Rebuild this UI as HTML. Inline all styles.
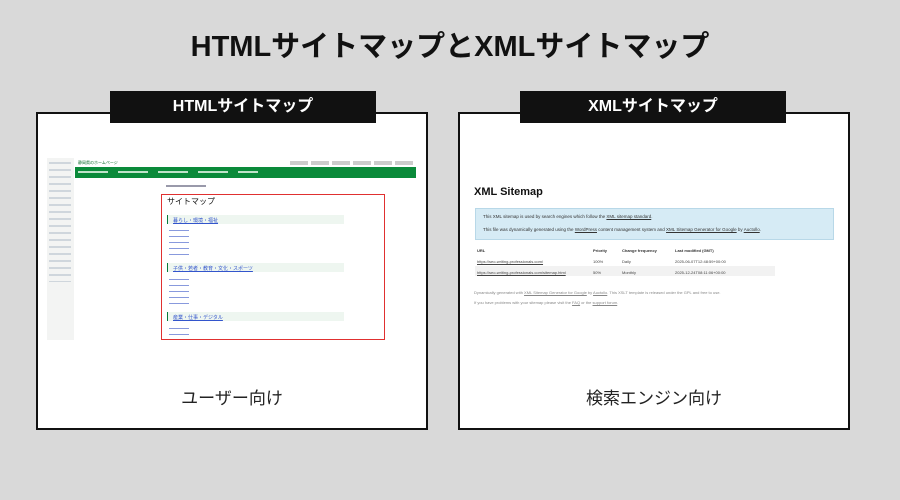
<!DOCTYPE html>
<html><head><meta charset="utf-8"><style>
*{margin:0;padding:0;box-sizing:border-box}
body{width:900px;height:500px;background:#d9d9d9;font-family:"Liberation Sans","Noto Sans CJK JP",sans-serif;position:relative;overflow:hidden}
.a{position:absolute}
h1{position:absolute;top:23px;left:0;width:900px;text-align:center;font-size:29px;font-weight:bold;color:#111}
.panel{position:absolute;top:112px;width:392px;height:318px;background:#fff;border:2px solid #111}
.lab{position:absolute;top:91px;width:266px;height:32px;background:#111;color:#fff;font-weight:bold;font-size:16px;text-align:center;line-height:32px}
.cap{position:absolute;top:384px;width:392px;text-align:center;font-size:17px;color:#222}
.t{font-size:4px;color:#3355cc;position:absolute;white-space:nowrap}
</style></head><body>
<h1>HTMLサイトマップとXMLサイトマップ</h1>
<div class="panel" style="left:36px"></div>
<div class="panel" style="left:458px"></div>
<div class="lab" style="left:110px">HTMLサイトマップ</div>
<div class="lab" style="left:520px">XMLサイトマップ</div>
<div class="cap" style="left:36px">ユーザー向け</div>
<div class="cap" style="left:458px">検索エンジン向け</div>

<div class="a" style="left:47px;top:158px;width:27px;height:182px;background:#f3f4f3"></div>
<div class="a" style="left:75px;top:167px;width:341px;height:11px;background:#0a8a3a"></div>
<div class="a" style="left:78px;top:160px;font-size:4px;color:#0a6a2a">静岡県のホームページ</div>
<div class="a" style="left:290px;top:161px;width:126px;height:4px;background:repeating-linear-gradient(90deg,#ccc 0 18px,#fff 18px 21px)"></div>
<div class="a" style="left:78px;top:171px;width:180px;height:2px;background:repeating-linear-gradient(90deg,#bfe3c9 0 30px,transparent 30px 40px)"></div>
<div class="a" style="left:49px;top:162px;width:22px;height:120px;background:repeating-linear-gradient(180deg,#9ab 0 2px,transparent 2px 7px);opacity:.4"></div>
<div class="a" style="left:166px;top:185px;width:40px;height:2px;background:#99a"></div>
<div class="a" style="left:161px;top:194px;width:224px;height:146px;border:1px solid #e03030"></div>
<div class="a" style="left:167px;top:196px;font-size:8px;color:#111">サイトマップ</div>
<div class="a" style="left:167px;top:215px;width:177px;height:9px;background:#eef6f0;border-left:1px solid #0a7a3a"></div>
<div class="t" style="left:173px;top:217px;font-size:5px;text-decoration:underline">暮らし・環境・福祉</div>
<div class="a" style="left:167px;top:263px;width:177px;height:9px;background:#eef6f0;border-left:1px solid #0a7a3a"></div>
<div class="t" style="left:173px;top:265px;font-size:5px;text-decoration:underline">子供・若者・教育・文化・スポーツ</div>
<div class="a" style="left:167px;top:312px;width:177px;height:9px;background:#eef6f0;border-left:1px solid #0a7a3a"></div>
<div class="t" style="left:173px;top:314px;font-size:5px;text-decoration:underline">産業・仕事・デジタル</div>
<div class="a" style="left:169px;top:230px;width:20px;height:25px;background:repeating-linear-gradient(180deg,#8899dd 0 1px,transparent 1px 6px)"></div>
<div class="a" style="left:169px;top:279px;width:20px;height:25px;background:repeating-linear-gradient(180deg,#8899dd 0 1px,transparent 1px 6px)"></div>
<div class="a" style="left:169px;top:328px;width:20px;height:10px;background:repeating-linear-gradient(180deg,#8899dd 0 1px,transparent 1px 6px)"></div>

<div class="a" style="left:474px;top:186px;font-size:11px;font-weight:bold;color:#111">XML Sitemap</div>
<div class="a" style="left:475px;top:208px;width:359px;height:32px;background:#d6ebf5;border:1px solid #b8d8e8"></div>
<div class="a" style="left:483px;top:214px;font-size:4.5px;color:#333">This XML sitemap is used by search engines which follow the <u>XML sitemap standard</u>.</div>
<div class="a" style="left:483px;top:227px;font-size:4.5px;color:#333">This file was dynamically generated using the <u>WordPress</u> content management system and <u>XML Sitemap Generator for Google</u> by <u>Auctollo</u>.</div>
<div class="a" style="left:475px;top:266px;width:300px;height:10px;background:#f2f2f2"></div>
<div class="a" style="left:477px;top:248px;font-size:4px;color:#333;font-weight:bold">URL</div>
<div class="a" style="left:593px;top:248px;font-size:4px;color:#333;font-weight:bold">Priority</div>
<div class="a" style="left:622px;top:248px;font-size:4px;color:#333;font-weight:bold">Change frequency</div>
<div class="a" style="left:675px;top:248px;font-size:4px;color:#333;font-weight:bold">Last modified (GMT)</div>
<div class="a" style="left:477px;top:259px;font-size:4px;color:#444"><u>https://seo-writing-professionals.com/</u></div>
<div class="a" style="left:593px;top:259px;font-size:4px;color:#444">100%</div>
<div class="a" style="left:622px;top:259px;font-size:4px;color:#444">Daily</div>
<div class="a" style="left:675px;top:259px;font-size:4px;color:#444">2025-06-07T12:48:59+00:00</div>
<div class="a" style="left:477px;top:270px;font-size:4px;color:#444"><u>https://seo-writing-professionals.com/sitemap.html</u></div>
<div class="a" style="left:593px;top:270px;font-size:4px;color:#444">50%</div>
<div class="a" style="left:622px;top:270px;font-size:4px;color:#444">Monthly</div>
<div class="a" style="left:675px;top:270px;font-size:4px;color:#444">2025-12-24T08:11:06+00:00</div>
<div class="a" style="left:474px;top:290px;font-size:4px;color:#888">Dynamically generated with <u>XML Sitemap Generator for Google</u> by <u>Auctollo</u>. This XSLT template is released under the GPL and free to use.</div>
<div class="a" style="left:474px;top:300px;font-size:4px;color:#888">If you have problems with your sitemap please visit the <u>FAQ</u> or the <u>support forum</u>.</div>
</body></html>
